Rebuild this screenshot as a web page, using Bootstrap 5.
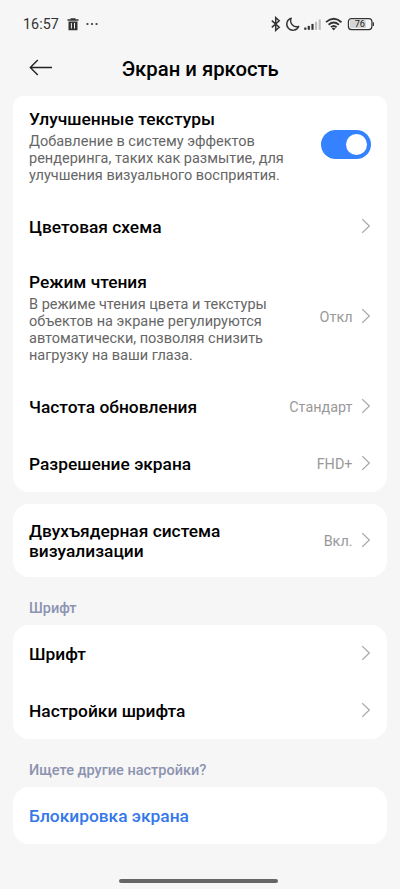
<!DOCTYPE html>
<html lang="ru">
<head>
<meta charset="utf-8">
<meta name="viewport" content="width=device-width, initial-scale=1">
<title>Экран и яркость</title>
<link href="https://cdn.jsdelivr.net/npm/bootstrap@5.3.0/dist/css/bootstrap.min.css" rel="stylesheet">
<style>
body{background:#f6f6f6;font-family:Roboto,"Liberation Sans",sans-serif;color:#000;height:889px;overflow:hidden}
.screen{width:400px;height:889px}
.status{height:46px;padding:2px 25px 0 23px;color:#333}
.clock{font-size:14.3px;letter-spacing:.05px;line-height:20px}
.topbar{height:50px;padding:0 29px 0 29px}
.topbar h1{font-size:20.3px;font-weight:500;line-height:24px;margin:11px 23.5px 0 0}
.panel{background:#fff;border:0;border-radius:16px;margin:0 13px 0 12.5px;overflow:hidden}
.panel-first{border-radius:10px 10px 16px 16px}
.entry{background:transparent;border:0;padding:0 16px 0 16.5px;height:57px;color:#000}
.entry-name{font-size:17.35px;font-weight:500;line-height:20px}
.entry-note{font-size:14.5px;line-height:17.2px;color:#666;white-space:nowrap;padding-top:3.5px;margin-bottom:-3.5px}
.entry-value{font-size:14.4px;line-height:20px;color:#999;margin-right:8.5px;padding-top:2.6px}
.arrow{margin-top:-1px}
.caption{font-size:14.5px;font-weight:500;line-height:20px;color:#8c93b0;padding-left:29px}
.toggle.form-check-input{width:50px;height:29px;margin:-1px 0 0;border:0;background-color:#3482ff;background-image:none;border-radius:15px;padding:0 4px}
.toggle::after{content:"";display:block;width:21px;height:21px;border-radius:50%;background:#fff;margin:4px 0 0 auto}
.link-blue{color:#3478ea}
.entry-top{height:102px;padding-bottom:4px}
.entry-reading{height:123px}
.panel-core{margin-top:12px}
.entry-core{height:73px}
.caption-font{margin-top:22px;height:26.4px}
.caption-more{margin-top:21.2px;height:26.6px}
.entry-last{height:56.6px;padding-top:.6px}
.homebar{width:159px;height:4px;border-radius:2px;background:#666;margin:auto 0 6.5px 119px}
</style>
</head>
<body>
<main class="screen d-flex flex-column">
  <div class="status d-flex align-items-center flex-shrink-0">
    <span class="clock">16:57</span>
    <svg class="ms-2" width="12" height="13" viewBox="0 0 12 13"><path d="M.5 1.3h3V.3h5v1h3v1.5H.5zM1.5 3.6h9v8.6h-9z" fill="#333"/><path d="M4.4 5v5.5M7.5 5v5.5" stroke="#f6f6f6" stroke-width="1"/></svg>
    <svg width="14" height="4" viewBox="0 0 14 4" style="margin-left:7px"><g fill="#333"><circle cx="1.5" cy="2" r="1.1"/><circle cx="6" cy="2" r="1.1"/><circle cx="10.5" cy="2" r="1.1"/></g></svg>
    <svg class="ms-auto" width="104" height="16" viewBox="0 0 104 16" fill="none" stroke="#333">
      <path d="M.8 4.6 8.2 11.3 4.7 14.4V1.6L8.2 4.7.8 11.4" stroke-width="1.5"/>
      <path d="M20.2 2.1A6.2 6.2 0 1 0 27.7 10.4A6.1 6.1 0 0 1 20.2 2.1Z" stroke-width="1.4" stroke-linejoin="round"/>
      <g stroke="none"><rect x="33.2" y="11.5" width="2.2" height="2.3" fill="#333"/><rect x="36.7" y="9.9" width="2.2" height="3.9" fill="#333"/><rect x="40.4" y="7.9" width="2.2" height="5.9" fill="#333"/><rect x="44" y="5.8" width="2.1" height="8" fill="#bbb"/><rect x="47.7" y="3.5" width="2.1" height="10.3" fill="#bbb"/></g>
      <g stroke-width="1.8"><path d="M55 6.2Q62.7 -.6 70.5 6.2"/><path d="M57.6 8.7Q62.7 4.3 67.9 8.7"/><path d="M59.9 11.2Q62.7 8.7 65.6 11.2"/></g><path d="M62.7 14.4 60.7 12.3Q62.7 11 64.7 12.3Z" fill="#333" stroke="none"/>
      <rect x="77.4" y="2.6" width="23.5" height="11" rx="3" stroke-width="1.2"/>
      <path d="M80.2 4.2H95V12H80.2Q78.9 12 78.9 10.7V5.5Q78.9 4.2 80.2 4.2Z" fill="#d5d5d5" stroke="none"/>
      <path d="M102.3 6.3v3.6" stroke-width="1.3"/>
      <text x="88.8" y="11.4" text-anchor="middle" font-family="Roboto,sans-serif" font-size="9.2" font-weight="400" fill="#222" stroke="none">76</text>
    </svg>
  </div>
  <header class="topbar d-flex align-items-start flex-shrink-0">
    <svg class="mt-2" width="24" height="28" viewBox="0 0 24 28" fill="none" stroke="#222" stroke-width="1.4"><path d="M23 13.5H1.5M8.8 5.9 1.3 13.5 8.8 21.1"/></svg>
    <h1 class="flex-fill text-center">Экран и яркость</h1>
  </header>

  <section class="panel panel-first list-group flex-shrink-0">
    <div class="entry entry-top list-group-item d-flex align-items-center">
      <div class="flex-fill"><div class="entry-name">Улучшенные текстуры</div>
      <div class="entry-note">Добавление в систему эффектов<br>рендеринга, таких как размытие, для<br>улучшения визуального восприятия.</div></div>
      <div class="form-check-input toggle flex-shrink-0" role="switch" aria-checked="true"></div>
    </div>
    <div class="entry list-group-item d-flex align-items-center"><div class="entry-name flex-fill">Цветовая схема</div><svg class="arrow" width="10" height="16" viewBox="0 0 10 16"><path d="M1.2 1.1 8.3 8 1.2 14.9" fill="none" stroke="#aaa" stroke-width="1.3"/></svg></div>
    <div class="entry entry-reading list-group-item d-flex align-items-center">
      <div class="flex-fill"><div class="entry-name">Режим чтения</div>
      <div class="entry-note">В режиме чтения цвета и текстуры<br>объектов на экране регулируются<br>автоматически, позволяя снизить<br>нагрузку на ваши глаза.</div></div>
      <span class="entry-value">Откл</span><svg class="arrow" width="10" height="16" viewBox="0 0 10 16"><path d="M1.2 1.1 8.3 8 1.2 14.9" fill="none" stroke="#aaa" stroke-width="1.3"/></svg>
    </div>
    <div class="entry list-group-item d-flex align-items-center"><div class="entry-name flex-fill">Частота обновления</div><span class="entry-value">Стандарт</span><svg class="arrow" width="10" height="16" viewBox="0 0 10 16"><path d="M1.2 1.1 8.3 8 1.2 14.9" fill="none" stroke="#aaa" stroke-width="1.3"/></svg></div>
    <div class="entry list-group-item d-flex align-items-center"><div class="entry-name flex-fill">Разрешение экрана</div><span class="entry-value">FHD+</span><svg class="arrow" width="10" height="16" viewBox="0 0 10 16"><path d="M1.2 1.1 8.3 8 1.2 14.9" fill="none" stroke="#aaa" stroke-width="1.3"/></svg></div>
  </section>

  <section class="panel panel-core list-group flex-shrink-0">
    <div class="entry entry-core list-group-item d-flex align-items-center"><div class="entry-name flex-fill">Двухъядерная система<br>визуализации</div><span class="entry-value">Вкл.</span><svg class="arrow" width="10" height="16" viewBox="0 0 10 16"><path d="M1.2 1.1 8.3 8 1.2 14.9" fill="none" stroke="#aaa" stroke-width="1.3"/></svg></div>
  </section>

  <h2 class="caption caption-font mb-0">Шрифт</h2>
  <section class="panel list-group flex-shrink-0">
    <div class="entry list-group-item d-flex align-items-center"><div class="entry-name flex-fill">Шрифт</div><svg class="arrow" width="10" height="16" viewBox="0 0 10 16"><path d="M1.2 1.1 8.3 8 1.2 14.9" fill="none" stroke="#aaa" stroke-width="1.3"/></svg></div>
    <div class="entry list-group-item d-flex align-items-center"><div class="entry-name flex-fill">Настройки шрифта</div><svg class="arrow" width="10" height="16" viewBox="0 0 10 16"><path d="M1.2 1.1 8.3 8 1.2 14.9" fill="none" stroke="#aaa" stroke-width="1.3"/></svg></div>
  </section>

  <h2 class="caption caption-more mb-0">Ищете другие настройки?</h2>
  <section class="panel list-group flex-shrink-0">
    <a class="entry entry-last link-blue list-group-item d-flex align-items-center" href="#"><span class="entry-name">Блокировка экрана</span></a>
  </section>
  <div class="homebar"></div>
</main>
<script src="https://cdn.jsdelivr.net/npm/bootstrap@5.3.0/dist/js/bootstrap.bundle.min.js"></script>
</body>
</html>
